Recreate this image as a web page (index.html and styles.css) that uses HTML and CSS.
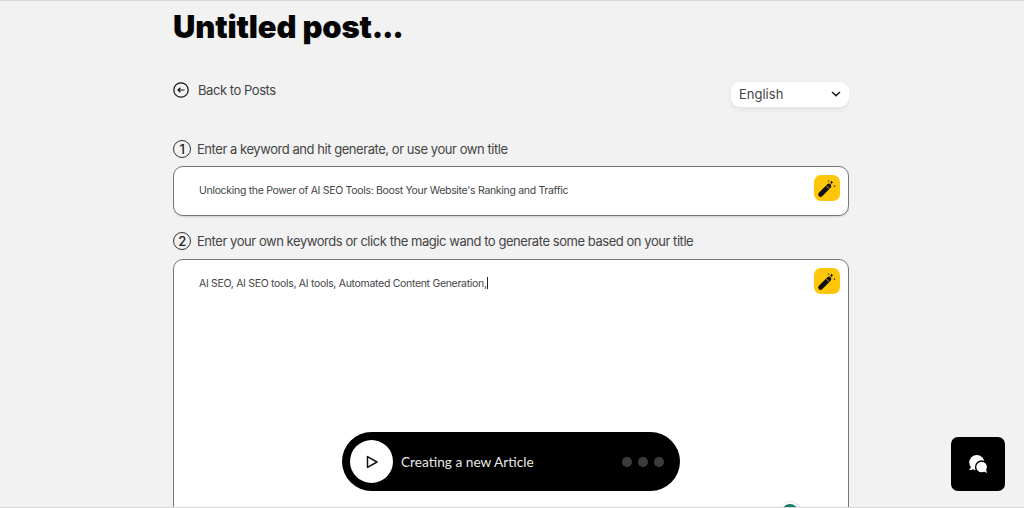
FILE: index.html
```html
<!DOCTYPE html>
<html lang="en">
<head>
    <meta charset="UTF-8">
    <meta name="viewport" content="width=device-width, initial-scale=1.0">
    <title>Untitled post</title>
    <link rel="stylesheet" href="styles.css">
</head>
<body>
    <div class="page">
        <h1>Untitled post<span class="ellipsis">...</span></h1>

        <div class="toolbar">
            <a class="back" href="#">
                <svg width="16" height="16" viewBox="0 0 16 16" fill="none" stroke="#111" stroke-width="1.2">
                    <circle cx="8" cy="8" r="7.2"/>
                    <path d="M11.5 8H5M7.4 5.7 5 8l2.4 2.3"/>
                </svg>
                <span>Back to Posts</span>
            </a>
            <div class="lang">
                <span>English</span>
                <svg width="10" height="6" viewBox="0 0 10 6" fill="none" stroke="#222" stroke-width="1.6">
                    <path d="M1 1l4 3.6L9 1"/>
                </svg>
            </div>
        </div>

        <div class="step step-one">
            <span class="num">1</span>
            <span>Enter a keyword and hit generate, or use your own title</span>
        </div>
        <div class="box box-title">
            <p>Unlocking the Power of AI SEO Tools: Boost Your Website's Ranking and Traffic</p>
            <button class="wand" type="button" aria-label="Generate">
                <svg width="20" height="20" viewBox="0 0 20 20">
                    <path d="M3.5 16.5 12 8" stroke="#111" stroke-width="4.6" stroke-linecap="round" fill="none"/>
                    <path d="M9.2 7.8l3 3" stroke="#ffc60a" stroke-width="0.8"/>
                    <path d="M14.5 2.5l.6 1.3 1.3.5-1.3.6-.6 1.3-.5-1.3-1.3-.6 1.3-.5zM17.5 7l.3.8.8.3-.8.4-.3.8-.4-.8-.8-.4.8-.3zM11.5 2l.3.7.7.3-.7.3-.3.7-.3-.7-.7-.3.7-.3z" fill="#111"/>
                </svg>
            </button>
        </div>

        <div class="step step-two">
            <span class="num">2</span>
            <span>Enter your own keywords or click the magic wand to generate some based on your title</span>
        </div>
        <div class="box box-keywords">
            <p>AI SEO, AI SEO tools, AI tools, Automated Content Generation,<span class="caret"></span></p>
            <button class="wand" type="button" aria-label="Generate">
                <svg width="20" height="20" viewBox="0 0 20 20">
                    <path d="M3.5 16.5 12 8" stroke="#111" stroke-width="4.6" stroke-linecap="round" fill="none"/>
                    <path d="M9.2 7.8l3 3" stroke="#ffc60a" stroke-width="0.8"/>
                    <path d="M14.5 2.5l.6 1.3 1.3.5-1.3.6-.6 1.3-.5-1.3-1.3-.6 1.3-.5zM17.5 7l.3.8.8.3-.8.4-.3.8-.4-.8-.8-.4.8-.3zM11.5 2l.3.7.7.3-.7.3-.3.7-.3-.7-.7-.3.7-.3z" fill="#111"/>
                </svg>
            </button>
            <span class="grammar-dot"></span>
        </div>
    </div>

    <div class="player">
        <span class="play">
            <svg width="14" height="14" viewBox="0 0 14 14" fill="none" stroke="#111" stroke-width="1.5" stroke-linejoin="round">
                <path d="M2.5 1.6 12 7l-9.5 5.4z"/>
            </svg>
        </span>
        <span class="player-text">Creating a new Article</span>
        <span class="dots"><i></i><i></i><i></i></span>
    </div>

    <button class="chat" type="button" aria-label="Chat">
        <svg width="22" height="22" viewBox="0 0 22 22">
            <path d="M4 13c.2 1.5-.6 3-2.4 4 2 .3 4-.3 5-1.3z" fill="#fff"/>
            <circle cx="9.8" cy="9.6" r="7.6" fill="#fff"/>
            <circle cx="14.6" cy="14" r="6" fill="#fff" stroke="#000" stroke-width="1.4"/>
            <path d="M17 18.5l3 1.5-.8-3.200z" fill="#fff"/>
        </svg>
    </button>
</body>
</html>
```

FILE: styles.css
```css
body {
    margin: 0;
    height: 508px;
    overflow: hidden;
    font-family: Inter, "Liberation Sans", sans-serif;
    background-color: #f2f2f2;
    color: #333;
    border-top: 1px solid #d8d8d8;
    border-bottom: 1px solid #d8d8d8;
    box-sizing: border-box;
}

.page {
    width: 676px;
    height: 506px;
    margin-left: 173px;
    overflow: hidden;
}

h1 {
    margin: 0;
    padding-top: 7px;
    font-size: 31px;
    line-height: 38px;
    font-weight: 900;
    letter-spacing: -0.15px;
    color: #050505;
}

.ellipsis {
    letter-spacing: -1.4px;
}

.toolbar {
    display: flex;
    justify-content: space-between;
    align-items: flex-start;
    margin-top: 36px;
}

.back {
    display: flex;
    align-items: center;
    gap: 9px;
    height: 16px;
    color: #444;
    font-size: 13px;
    text-decoration: none;
    letter-spacing: -0.45px;
}

.lang {
    display: flex;
    align-items: center;
    justify-content: space-between;
    width: 118px;
    height: 25px;
    padding: 0 8px 1px;
    box-sizing: border-box;
    background-color: #fff;
    border-radius: 9px;
    box-shadow: 0 2px 6px rgba(0, 0, 0, 0.08);
    font-size: 13px;
    color: #444;
}

.step {
    display: flex;
    align-items: center;
    gap: 6px;
    height: 18px;
    font-size: 13px;
    letter-spacing: -0.45px;
    color: #444;
}

.step-one {
    margin-top: 33px;
}

.step-two {
    margin-top: 16px;
}

.num {
    display: flex;
    align-items: center;
    justify-content: center;
    width: 16px;
    height: 16px;
    border: 1px solid #333;
    border-radius: 50%;
    font-size: 13px;
    font-weight: 500;
    color: #222;
}

.box {
    position: relative;
    margin-top: 8px;
    background-color: #fff;
    border: 1px solid #777;
    border-radius: 10px;
    box-sizing: border-box;
}

.box p {
    margin: 0;
    padding-top: 17px;
    padding-left: 25px;
    font-size: 10.5px;
    letter-spacing: -0.31px;
    color: #444;
}

.box-title {
    height: 50px;
    box-shadow: 0 1px 2px rgba(0, 0, 0, 0.15);
}

.box-keywords {
    height: 260px;
    margin-top: 9px;
}

.caret {
    display: inline-block;
    width: 1px;
    height: 12px;
    background-color: #222;
    vertical-align: -2px;
}

.wand {
    position: absolute;
    top: 8px;
    right: 8px;
    display: flex;
    align-items: center;
    justify-content: center;
    width: 26px;
    height: 26px;
    padding: 0;
    border: none;
    border-radius: 7px;
    background-color: #ffc60a;
}

.grammar-dot {
    position: absolute;
    left: 605px;
    top: 241px;
    width: 22px;
    height: 22px;
    border: 3px solid #fff;
    outline: 1px solid #e4e4e4;
    outline-offset: -1px;
    border-radius: 50%;
    background-color: #1c7c66;
    box-sizing: border-box;
}

.player {
    position: absolute;
    left: 342px;
    top: 432px;
    display: flex;
    align-items: center;
    width: 338px;
    height: 59px;
    padding: 0 16px 0 8px;
    box-sizing: border-box;
    background-color: #000;
    border-radius: 30px;
}

.play {
    display: flex;
    align-items: center;
    justify-content: center;
    width: 43px;
    height: 43px;
    background-color: #fff;
    border-radius: 50%;
}

.player-text {
    margin-left: 8px;
    font-family: Lato, "Noto Sans", sans-serif;
    font-size: 13.7px;
    color: #e8e8e8;
}

.dots {
    display: flex;
    gap: 6px;
    margin-left: auto;
}

.dots i {
    display: block;
    width: 10px;
    height: 10px;
    background-color: #3c3c3c;
    border-radius: 50%;
}

.chat {
    position: absolute;
    left: 951px;
    top: 437px;
    display: flex;
    align-items: center;
    justify-content: center;
    width: 54px;
    height: 54px;
    padding: 0;
    border: none;
    background-color: #000;
    border-radius: 7px;
}
```
